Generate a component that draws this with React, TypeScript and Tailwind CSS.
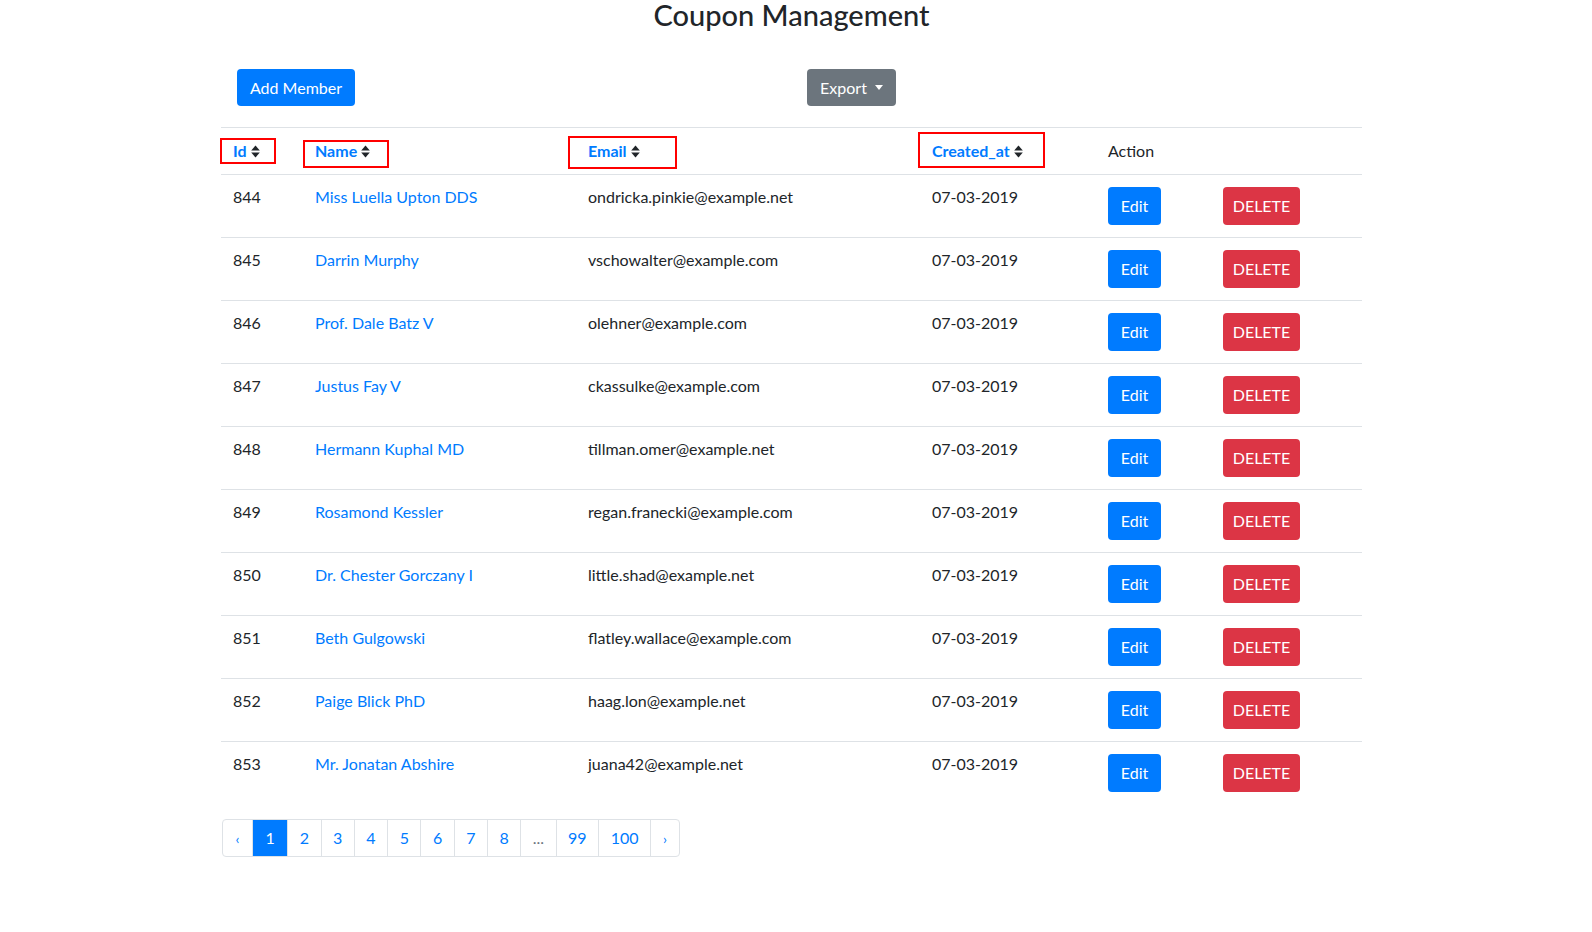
import type { ReactNode } from 'react'

type Member = {
  id: number
  name: string
  email: string
  createdAt: string
}

const MEMBERS: Member[] = [
  { id: 844, name: 'Miss Luella Upton DDS', email: 'ondricka.pinkie@example.net', createdAt: '07-03-2019' },
  { id: 845, name: 'Darrin Murphy', email: 'vschowalter@example.com', createdAt: '07-03-2019' },
  { id: 846, name: 'Prof. Dale Batz V', email: 'olehner@example.com', createdAt: '07-03-2019' },
  { id: 847, name: 'Justus Fay V', email: 'ckassulke@example.com', createdAt: '07-03-2019' },
  { id: 848, name: 'Hermann Kuphal MD', email: 'tillman.omer@example.net', createdAt: '07-03-2019' },
  { id: 849, name: 'Rosamond Kessler', email: 'regan.franecki@example.com', createdAt: '07-03-2019' },
  { id: 850, name: 'Dr. Chester Gorczany I', email: 'little.shad@example.net', createdAt: '07-03-2019' },
  { id: 851, name: 'Beth Gulgowski', email: 'flatley.wallace@example.com', createdAt: '07-03-2019' },
  { id: 852, name: 'Paige Blick PhD', email: 'haag.lon@example.net', createdAt: '07-03-2019' },
  { id: 853, name: 'Mr. Jonatan Abshire', email: 'juana42@example.net', createdAt: '07-03-2019' },
]

const PAGES = ['1', '2', '3', '4', '5', '6', '7', '8', '...', '99', '100']

const SortIcon = () => (
  <svg className="ml-[4px] inline-block" width="9" height="13" viewBox="0 0 9 13" fill="#212529">
    <path d="M4.5 0.5 L8.8 5.4 L0.2 5.4 Z" />
    <path d="M0.2 7.6 L8.8 7.6 L4.5 12.5 Z" />
  </svg>
)

// red annotation boxes drawn over the sortable headers
const SortHeader = ({ label, box }: { label: string; box: string }) => (
  <th className="relative px-[12px] py-[11px] text-left font-bold leading-[24px]">
    <a className="inline-flex items-center text-[#007bff]">
      {label}
      <SortIcon />
    </a>
    <span className={`pointer-events-none absolute border-2 border-[#ff0000] ${box}`} />
  </th>
)

const Button = ({ color, children }: { color: string; children: ReactNode }) => (
  <button className={`h-[38px] rounded-[4px] text-[16px] leading-[24px] text-white ${color}`}>
    {children}
  </button>
)

export default function App() {
  return (
    <div className="min-h-[932px] bg-white text-[16px] text-[#212529]" style={{ fontFamily: 'Lato, sans-serif' }}>
      <div className="ml-[221px] w-[1141px]">
        <h2 className="text-center text-[29px] font-medium leading-[30px]">Coupon Management</h2>

        <div className="mt-[39px] flex items-center pl-[16px]">
          <button className="h-[37px] w-[118px] rounded-[4px] bg-[#007bff] text-[16px] text-white">Add Member</button>
          <button className="ml-[452px] flex h-[37px] w-[89px] items-center justify-center gap-[8px] rounded-[4px] bg-[#6c757d] text-[16px] text-white">
            Export
            <span className="h-0 w-0 border-x-[4px] border-t-[5px] border-x-transparent border-t-white" />
          </button>
        </div>

        <table className="mt-[21px] w-full border-collapse">
          <colgroup>
            <col className="w-[82px]" />
            <col className="w-[273px]" />
            <col className="w-[344px]" />
            <col className="w-[176px]" />
            <col className="w-[115px]" />
            <col />
          </colgroup>
          <thead>
            <tr className="border-t border-b border-[#dee2e6]">
              <SortHeader label="Id" box="left-[-1px] top-[10px] h-[26px] w-[56px]" />
              <SortHeader label="Name" box="left-[0px] top-[12px] h-[28px] w-[86px]" />
              <SortHeader label="Email" box="left-[-8px] top-[8px] h-[33px] w-[109px]" />
              <SortHeader label="Created_at" box="left-[-2px] top-[4px] h-[36px] w-[127px]" />
              <th className="px-[12px] py-[11px] text-left font-normal leading-[24px]">Action</th>
              <th />
            </tr>
          </thead>
          <tbody>
            {MEMBERS.map((member, index) => (
              <tr key={member.id} className={index > 0 ? 'border-t border-[#dee2e6]' : ''}>
                <td className="px-[12px] pt-[10px] pb-[12px] align-top leading-[24px]">{member.id}</td>
                <td className="px-[12px] pt-[10px] pb-[12px] align-top leading-[24px]">
                  <a className="text-[#007bff]">{member.name}</a>
                </td>
                <td className="px-[12px] pt-[10px] pb-[12px] align-top leading-[24px]">{member.email}</td>
                <td className="px-[12px] pt-[10px] pb-[12px] align-top leading-[24px]">{member.createdAt}</td>
                <td className="px-[12px] py-[12px] align-top">
                  <div className="flex w-[53px] flex-col">
                    <Button color="bg-[#007bff]">Edit</Button>
                  </div>
                </td>
                <td className="px-[12px] py-[12px] align-top">
                  <div className="flex w-[77px] flex-col">
                    <Button color="bg-[#dc3545]">DELETE</Button>
                  </div>
                </td>
              </tr>
            ))}
          </tbody>
        </table>

        <nav className="mt-[15px] ml-[1px] flex">
          <ul className="flex h-[38px] overflow-hidden rounded-[4px] border border-[#dee2e6]">
            <li className="flex w-[29px] items-center justify-center text-[14px] text-[#007bff]">‹</li>
            {PAGES.map((page) => (
              <li
                key={page}
                className={`flex items-center justify-center border-l border-[#dee2e6] px-[11.5px] ${
                  page === '1'
                    ? 'border-[#007bff] bg-[#007bff] px-[12.5px] text-white'
                    : page === '...'
                      ? 'text-[#6c757d]'
                      : 'text-[#007bff]'
                }`}
              >
                {page}
              </li>
            ))}
            <li className="flex w-[29px] items-center justify-center border-l border-[#dee2e6] text-[14px] text-[#007bff]">›</li>
          </ul>
        </nav>
      </div>
    </div>
  )
}
